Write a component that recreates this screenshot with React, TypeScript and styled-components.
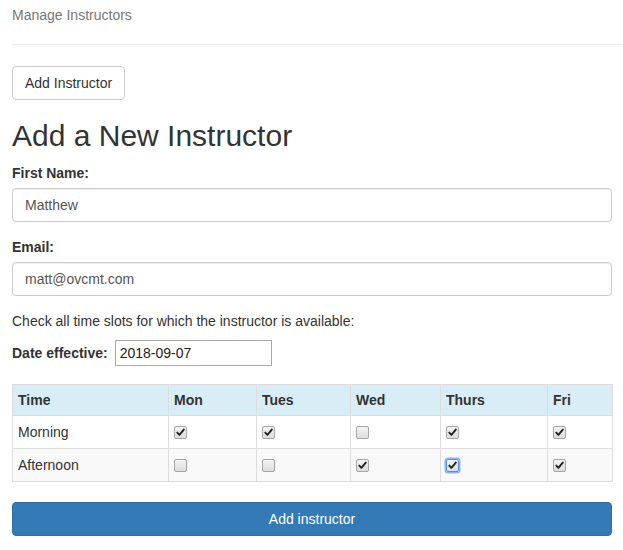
import React from "react";
import styled, { createGlobalStyle, css } from "styled-components";

const GlobalStyle = createGlobalStyle`
  html, body { margin: 0; padding: 0; background: #fff; }
  body {
    font-family: "Liberation Sans", Arial, Helvetica, sans-serif;
    font-size: 14px;
    line-height: 20px;
    color: #333;
  }
  * { box-sizing: border-box; }
`;

const Page = styled.div`
  padding: 5px 11px 0 12px;
`;

const Brand = styled.div`
  color: #777;
  font-size: 14px;
  line-height: 20px;
`;

const Rule = styled.hr`
  margin: 19px -11px 21px 0;
  border: 0;
  border-top: 1px solid #eee;
  height: 0;
`;

const Button = styled.button<{ $primary?: boolean; $block?: boolean }>`
  display: ${(p) => (p.$block ? "block" : "inline-block")};
  width: ${(p) => (p.$block ? "100%" : "auto")};
  height: 34px;
  padding: 6px 12px;
  font-family: inherit;
  font-size: 14px;
  line-height: 20px;
  border-radius: 4px;
  cursor: pointer;
  ${(p) =>
    p.$primary
      ? css`
          background: #337ab7;
          border: 1px solid #2e6da4;
          color: #fff;
        `
      : css`
          background: #fff;
          border: 1px solid #ccc;
          color: #333;
        `}
`;

const Title = styled.h2`
  margin: 19px 0 11px;
  font-size: 30px;
  line-height: 33px;
  font-weight: 500;
  color: #333;
`;

const FormGroup = styled.div`
  margin-bottom: 15px;
`;

const Label = styled.label`
  display: block;
  font-weight: bold;
  margin-bottom: 5px;
`;

const TextInput = styled.input`
  display: block;
  width: 100%;
  height: 34px;
  padding: 6px 12px;
  font-family: inherit;
  font-size: 14px;
  line-height: 20px;
  color: #555;
  background: #fff;
  border: 1px solid #ccc;
  border-radius: 4px;
  box-shadow: inset 0 1px 1px rgba(0, 0, 0, 0.075);
  outline: none;
`;

const Help = styled.p`
  margin: 0 0 9px;
`;

const DateRow = styled.div`
  display: flex;
  align-items: center;
  gap: 7px;
  height: 26px;
  margin-bottom: 18px;
`;

const InlineLabel = styled.label`
  font-weight: bold;
`;

const DateInput = styled.input`
  width: 157px;
  height: 26px;
  padding: 1px 4px;
  font-family: inherit;
  font-size: 14px;
  color: #222;
  border: 1px solid #a9a9a9;
  border-radius: 0;
  outline: none;
`;

const Table = styled.table`
  width: 100%;
  border-collapse: collapse;
  table-layout: fixed;
  margin-bottom: 20px;
`;

const Col = styled.col<{ $w: number }>`
  width: ${(p) => p.$w}px;
`;

const HeadRow = styled.tr`
  background: #d9edf7;
`;

const Th = styled.th`
  text-align: left;
  font-weight: bold;
  padding: 5px;
  line-height: 20px;
  border: 1px solid #ddd;
`;

const BodyRow = styled.tr<{ $striped?: boolean }>`
  background: ${(p) => (p.$striped ? "#f9f9f9" : "#fff")};
`;

const Td = styled.td`
  padding: 6px 5px;
  line-height: 20px;
  border: 1px solid #ddd;
  vertical-align: middle;
`;

const Box = styled.span<{ $focused?: boolean }>`
  display: block;
  width: 13px;
  height: 13px;
  border: 1px solid ${(p) => (p.$focused ? "#5b8fe0" : "#a6a6a6")};
  border-radius: 2px;
  background: linear-gradient(#f4f4f4, #dcdcdc);
  box-shadow: ${(p) => (p.$focused ? "0 0 0 1.5px #8fb4f2" : "none")};
  position: relative;
  cursor: pointer;

  svg {
    position: absolute;
    left: 1px;
    top: 1px;
  }
`;

const Check = ({ checked, focused }: { checked: boolean; focused?: boolean }) => (
  <Box role="checkbox" aria-checked={checked} $focused={focused}>
    {checked && (
      <svg width="9" height="9" viewBox="0 0 9 9">
        <path d="M1.3 4.6 L3.4 6.8 L7.8 1.6" stroke="#222" strokeWidth="1.9" fill="none" strokeLinecap="round" strokeLinejoin="round" />
      </svg>
    )}
  </Box>
);

const days = ["Mon", "Tues", "Wed", "Thurs", "Fri"];
const widths = [156, 88, 94, 90, 107, 65];
const rows: { name: string; values: boolean[]; focus?: number }[] = [
  { name: "Morning", values: [true, true, false, true, true] },
  { name: "Afternoon", values: [false, false, true, true, true], focus: 3 },
];

export default function App() {
  return (
    <>
      <GlobalStyle />
      <Page>
        <Brand>Manage Instructors</Brand>
        <Rule />
        <Button>Add Instructor</Button>
        <Title>Add a New Instructor</Title>
        <FormGroup>
          <Label>First Name:</Label>
          <TextInput defaultValue="Matthew" />
        </FormGroup>
        <FormGroup>
          <Label>Email:</Label>
          <TextInput defaultValue="matt@ovcmt.com" />
        </FormGroup>
        <Help>Check all time slots for which the instructor is available:</Help>
        <DateRow>
          <InlineLabel>Date effective:</InlineLabel>
          <DateInput defaultValue="2018-09-07" />
        </DateRow>
        <Table>
          <colgroup>
            {widths.map((w, i) => (
              <Col key={i} $w={w} />
            ))}
          </colgroup>
          <thead>
            <HeadRow>
              <Th>Time</Th>
              {days.map((d) => (
                <Th key={d}>{d}</Th>
              ))}
            </HeadRow>
          </thead>
          <tbody>
            {rows.map((r, ri) => (
              <BodyRow key={r.name} $striped={ri % 2 === 1}>
                <Td>{r.name}</Td>
                {r.values.map((v, i) => (
                  <Td key={i}>
                    <Check checked={v} focused={r.focus === i} />
                  </Td>
                ))}
              </BodyRow>
            ))}
          </tbody>
        </Table>
        <Button $primary $block>Add instructor</Button>
      </Page>
    </>
  );
}
